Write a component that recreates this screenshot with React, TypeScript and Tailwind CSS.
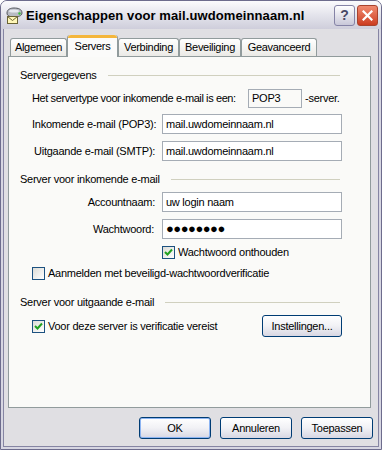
import type { ReactNode } from 'react'

const font = { fontFamily: '"Liberation Sans", Arial, sans-serif' }

function MailIcon() {
  return (
    <svg width="18" height="18" viewBox="0 0 18 18">
      <path d="M2 7 C2 3 6 2 9 2 C13 2 17 3 17 7 C17 10 13 11 9 11 C5 11 2 10 2 7 Z" fill="#b9bcc4" stroke="#54575e" strokeWidth="1" />
      <ellipse cx="9" cy="5" rx="5" ry="1.6" fill="#e6e8ee" />
      <circle cx="14.5" cy="7.5" r="1.2" fill="#39c23a" />
      <rect x="2.5" y="10.5" width="10" height="7" fill="#fff7b8" stroke="#6b6436" strokeWidth="1" />
      <path d="M2.5 10.5 L7.5 14.5 L12.5 10.5" fill="none" stroke="#6b6436" strokeWidth="1" />
    </svg>
  )
}

function TitleBar() {
  return (
    <div className="flex h-[28px] items-center bg-gradient-to-b from-[#fbfbfd] via-[#e4e4ec] to-[#cfcedb] pl-[4px] pr-[3px]">
      <MailIcon />
      <span className="ml-[3px] mt-[1px] whitespace-nowrap text-[13px] font-bold tracking-[0.1px] text-black" style={font}>
        Eigenschappen voor mail.uwdomeinnaam.nl
      </span>
      <div className="ml-auto flex gap-[2px]">
        <div className="flex h-[21px] w-[21px] items-center justify-center rounded-[3px] border border-[#8583a6] bg-gradient-to-b from-[#ffffff] to-[#c9c8d9] text-[14px] font-bold text-[#4a4a66]" style={font}>
          ?
        </div>
        <div className="flex h-[21px] w-[21px] items-center justify-center rounded-[3px] border border-[#a8432e] bg-gradient-to-b from-[#f08a6f] to-[#cc3a1e]">
          <svg width="11" height="11" viewBox="0 0 11 11">
            <path d="M1.5 1.5 L9.5 9.5 M9.5 1.5 L1.5 9.5" stroke="#fff" strokeWidth="2.2" strokeLinecap="square" />
          </svg>
        </div>
      </div>
    </div>
  )
}

function Tab({ label, width, active }: { label: string; width: number; active?: boolean }) {
  if (active) {
    return (
      <div
        className="relative z-10 -mb-px flex h-[22px] flex-col rounded-t-[3px] border-x border-[#919b9c] bg-[#fbfbfa]"
        style={{ width }}
      >
        <div className="h-[3px] rounded-t-[3px] bg-[#f4b63b]" />
        <div className="flex flex-1 items-start justify-center whitespace-nowrap text-[11px] tracking-[-0.3px] text-black" style={font}>
          {label}
        </div>
      </div>
    )
  }
  return (
    <div
      className="flex h-[18px] items-center justify-center whitespace-nowrap rounded-t-[3px] border-x border-t border-[#919b9c] bg-gradient-to-b from-[#ffffff] to-[#ebeae6] text-[11px] tracking-[-0.3px] text-black"
      style={{ width, ...font }}
    >
      {label}
    </div>
  )
}

function Header({ children }: { children: ReactNode }) {
  return (
    <div className="flex h-[13px] w-[320px] items-center gap-[11px] text-[11px] leading-[13px] text-black">
      <span>{children}</span>
      <div className="h-px flex-1 bg-[#d0d0bf]" />
    </div>
  )
}

function Field({ value }: { value: ReactNode }) {
  return (
    <div className="flex h-[20px] w-[180px] items-center border border-[#a5acb5] bg-white pl-[3px] text-[11px] text-black">
      {value}
    </div>
  )
}

function Check({ checked }: { checked?: boolean }) {
  return (
    <div className="flex h-[13px] w-[13px] shrink-0 items-center justify-center border border-[#1c5180] bg-gradient-to-br from-[#dcdcd7] to-[#ffffff]">
      {checked && (
        <svg width="9" height="9" viewBox="0 0 9 9">
          <path d="M1 4 L3.5 6.5 L8 1.5" fill="none" stroke="#21a121" strokeWidth="2" />
        </svg>
      )}
    </div>
  )
}

function Button({ children, def, width = 72 }: { children: ReactNode; def?: boolean; width?: number }) {
  return (
    <div
      className={`flex h-[22px] items-center justify-center whitespace-nowrap rounded-[3px] border border-[#003c74] bg-gradient-to-b from-[#ffffff] via-[#f1f1f5] to-[#d8d7e3] text-[11px] tracking-[-0.25px] text-black ${def ? 'shadow-[inset_0_0_0_1px_#8cb4f2]' : ''}`}
      style={{ width, ...font }}
    >
      {children}
    </div>
  )
}

export default function App() {
  return (
    <div className="flex h-[450px] w-[382px] flex-col overflow-hidden rounded-t-[7px] border border-[#6d6c8d] bg-[#e0dfe3]">
      <TitleBar />
      <div className="flex flex-1 flex-col border-x-2 border-b-2 border-[#d7d6e2]">
        <div className="flex flex-1 flex-col border-x border-b border-[#8685a3] bg-[#e0dfe3] pl-[4px] pr-[5px]">
          {/* tabs */}
          <div className="mt-[6px] flex items-end pl-[2px]">
            <Tab label="Algemeen" width={57} />
            <Tab label="Servers" width={51} active />
            <Tab label="Verbinding" width={61} />
            <Tab label="Beveiliging" width={62} />
            <Tab label="Geavanceerd" width={76} />
          </div>

          <div className="h-[352px] w-[363px] whitespace-nowrap border border-[#919b9c] bg-[#fafaf8] pl-[11px] pt-[12px] tracking-[-0.25px]" style={font}>
            <Header>Servergegevens</Header>

            <div className="ml-[12px] mt-[6px] flex h-[20px] items-center text-[11px] text-black">
              <span className="w-[216px] tracking-[-0.4px]">Het servertype voor inkomende e-mail is een:</span>
              <div className="flex h-[19px] w-[54px] items-center border border-[#a5acb5] pl-[3px]">POP3</div>
              <span className="ml-[3px]">-server.</span>
            </div>

            <div className="ml-[12px] mt-[6px] flex items-center text-[11px] text-black">
              <span className="w-[130px]">Inkomende e-mail (POP3):</span>
              <Field value="mail.uwdomeinnaam.nl" />
            </div>
            <div className="ml-[12px] mt-[7px] flex items-center text-[11px] text-black">
              <span className="w-[130px] pl-[2px]">Uitgaande e-mail (SMTP):</span>
              <Field value="mail.uwdomeinnaam.nl" />
            </div>

            <div className="mt-[12px]">
              <Header>Server voor inkomende e-mail</Header>
            </div>

            <div className="ml-[12px] mt-[6px] flex items-center text-[11px] text-black">
              <span className="w-[130px] pr-[7px] text-right">Accountnaam:</span>
              <Field value="uw login naam" />
            </div>
            <div className="ml-[12px] mt-[7px] flex items-center text-[11px] text-black">
              <span className="w-[130px] pr-[8px] text-right">Wachtwoord:</span>
              <Field value={<span className="text-[13px] tracking-[-0.5px]">●●●●●●●●</span>} />
            </div>

            <div className="ml-[142px] mt-[7px] flex h-[13px] items-center gap-[3px] text-[11px] text-black">
              <Check checked />
              <span>Wachtwoord onthouden</span>
            </div>
            <div className="ml-[12px] mt-[8px] flex h-[13px] items-center gap-[3px] text-[11px] text-black">
              <Check />
              <span>Aanmelden met beveiligd-wachtwoordverificatie</span>
            </div>

            <div className="mt-[16px]">
              <Header>Server voor uitgaande e-mail</Header>
            </div>

            <div className="ml-[12px] mt-[6px] flex w-[310px] items-center justify-between text-[11px] text-black">
              <div className="flex items-center gap-[3px]">
                <Check checked />
                <span>Voor deze server is verificatie vereist</span>
              </div>
              <Button width={80}>Instellingen...</Button>
            </div>
          </div>

          <div className="mt-[9px] flex justify-end gap-[9px]">
            <Button def>OK</Button>
            <Button>Annuleren</Button>
            <Button>Toepassen</Button>
          </div>
        </div>
      </div>
    </div>
  )
}
